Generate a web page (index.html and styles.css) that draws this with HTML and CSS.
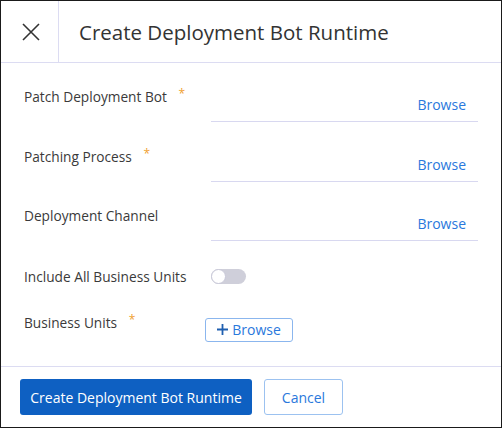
FILE: index.html
```html
<!DOCTYPE html>
<html lang="en">
<head>
  <meta charset="UTF-8">
  <title>Create Deployment Bot Runtime</title>
  <link rel="stylesheet" href="styles.css">
</head>
<body>
  <div class="dialog">
    <div class="dialog-head">
      <button class="close" aria-label="Close">
        <svg width="18" height="18" viewBox="0 0 18 18">
          <path d="M1 1 L17 17 M17 1 L1 17" stroke="#333" stroke-width="1.6" fill="none"/>
        </svg>
      </button>
      <h2 class="title">Create Deployment Bot Runtime</h2>
    </div>

    <div class="dialog-body">
      <div class="row">
        <label class="lbl">Patch Deployment Bot <span class="req">*</span></label>
        <div class="picker"><a href="#">Browse</a></div>
      </div>
      <div class="row">
        <label class="lbl">Patching Process <span class="req">*</span></label>
        <div class="picker"><a href="#">Browse</a></div>
      </div>
      <div class="row">
        <label class="lbl">Deployment Channel</label>
        <div class="picker"><a href="#">Browse</a></div>
      </div>
      <div class="row-toggle">
        <label class="lbl">Include All Business Units</label>
        <span class="toggle"><span class="knob"></span></span>
      </div>
      <div class="row-units">
        <label class="lbl">Business Units <span class="req">*</span></label>
        <button class="btn-browse">
          <svg class="plus" width="11" height="11" viewBox="0 0 11 11">
            <path d="M5.5 0 V11 M0 5.5 H11" stroke="#1f5fb0" stroke-width="1.8" fill="none"/>
          </svg>Browse
        </button>
      </div>
    </div>

    <div class="dialog-foot">
      <button class="btn-primary">Create Deployment Bot Runtime</button>
      <button class="btn-cancel">Cancel</button>
    </div>
  </div>
</body>
</html>
```

FILE: styles.css
```css
* { box-sizing: border-box; }
body {
  margin: 0;
  font-family: "Open Sans", Arial, sans-serif;
  color: #3a3a3a;
  background: #fff;
}
.dialog {
  width: 502px;
  height: 428px;
  border: 1px solid #1a1a1a;
  display: flex;
  flex-direction: column;
}
.dialog-head {
  display: flex;
  height: 62px;
  border-bottom: 1px solid #dcdcf2;
}
.close {
  width: 58px;
  border: none;
  border-right: 1px solid #dcdcf2;
  background: none;
  padding: 0 0 0 2px;
  display: flex;
  align-items: center;
  justify-content: center;
}
.title {
  margin: 0;
  padding-left: 20px;
  font-size: 20.5px;
  font-weight: 400;
  line-height: 62px;
  color: #333;
}
.dialog-body {
  flex: 1;
  padding: 21px 23px 0 23px;
}
.row {
  display: flex;
  height: 59.5px;
}
.lbl {
  width: 187px;
  font-size: 13.7px;
  line-height: 16px;
  padding-top: 5px;
  color: #3a3a3a;
}
.req {
  color: #f0a030;
  font-size: 12px;
  margin-left: 8px;
  position: relative;
  top: -4px;
}
.picker {
  width: 267px;
  height: 38px;
  border-bottom: 1px solid #d8d8f0;
  display: flex;
  align-items: flex-end;
  justify-content: flex-end;
  padding: 0 12px 8px 0;
}
.picker a {
  color: #2a78dc;
  font-size: 14px;
  line-height: 16px;
  text-decoration: none;
}
.row-toggle {
  display: flex;
  align-items: center;
  margin-top: 6px;
  height: 16px;
}
.row-toggle .lbl { padding-top: 0; }
.toggle {
  width: 35px;
  height: 15px;
  border-radius: 8px;
  background: #cfcfda;
  position: relative;
}
.knob {
  position: absolute;
  left: 0;
  top: 0;
  width: 15px;
  height: 15px;
  border-radius: 50%;
  background: #fff;
  border: 1px solid #c8c8d8;
}
.row-units {
  display: flex;
  margin-top: 30px;
}
.row-units .lbl {
  width: 181px;
  padding-top: 0;
}
.btn-browse {
  margin-top: 3px;
  width: 88px;
  height: 24px;
  border: 1px solid #8bb6ee;
  border-radius: 3px;
  background: #fff;
  color: #2a78dc;
  font-family: inherit;
  font-size: 14px;
  padding: 0;
  display: flex;
  align-items: center;
  justify-content: center;
}
.plus {
  margin-right: 4px;
}
.dialog-foot {
  border-top: 1px solid #dcdcf2;
  padding: 12px 19px 12px 19px;
  display: flex;
  gap: 12px;
}
.btn-primary {
  width: 232px;
  height: 36px;
  background: #0e60c2;
  color: #fff;
  border: none;
  border-radius: 3px;
  font-family: inherit;
  font-size: 14px;
}
.btn-cancel {
  width: 79px;
  height: 36px;
  background: #fff;
  color: #2a78dc;
  border: 1px solid #9cc2f0;
  border-radius: 3px;
  font-family: inherit;
  font-size: 14px;
}
```
